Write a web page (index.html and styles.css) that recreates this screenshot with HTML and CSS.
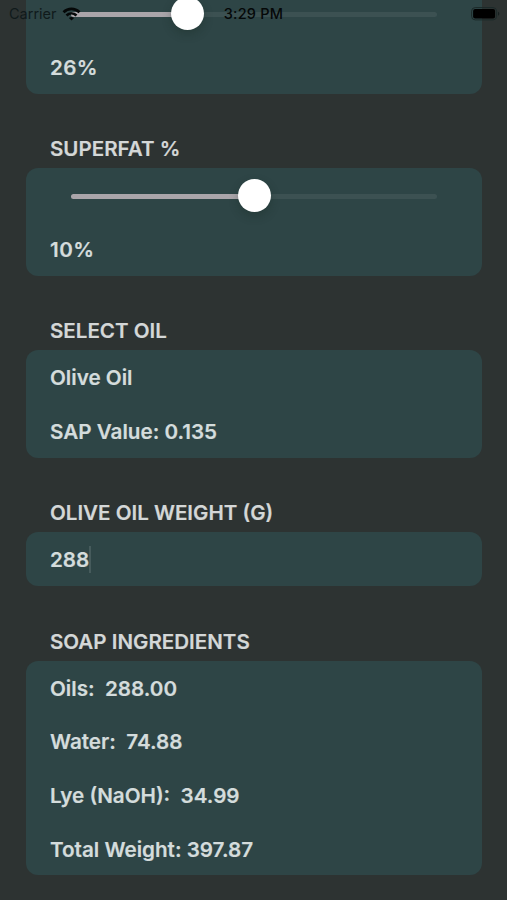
FILE: index.html
```html
<!DOCTYPE html>
<html lang="en">

<head>
    <meta charset="UTF-8">
    <meta name="viewport" content="width=device-width, initial-scale=1.0">
    <title>Soap Calculator</title>
    <link rel="stylesheet" href="styles.css">
</head>

<body>
    <div class="status-bar">
        <span class="carrier">Carrier</span>
        <svg class="wifi" viewBox="0 0 18 14" fill="none" stroke="#050808" stroke-width="2.7">
            <path d="M1 5.2 C5.6 0.7 12.4 0.7 17 5.2" />
            <path d="M4 8.5 C6.9 5.8 11.1 5.8 14 8.5" />
            <path d="M9 13.6 L6.4 11 C7.9 9.7 10.1 9.7 11.6 11 Z" fill="#050808" stroke="none" />
        </svg>
        <span class="time">3:29 PM</span>
        <svg class="battery" viewBox="0 0 29 14">
            <rect x="0.6" y="0.6" width="25" height="12.3" rx="3.6" fill="none" stroke="#1b2929" />
            <rect x="2.1" y="2.1" width="22" height="9.3" rx="2" fill="#000" />
            <path d="M27 4.7 C28.8 5.4 28.8 8.1 27 8.8 Z" fill="#172020" />
        </svg>
    </div>

    <main class="form">
        <section class="card">
            <div class="row slider-row">
                <div class="slider">
                    <div class="fill" style="width:32%"></div>
                    <div class="thumb" style="left:31.8%"></div>
                </div>
            </div>
            <div class="row percent">26%</div>
        </section>

        <h2 class="header">SUPERFAT %</h2>
        <section class="card">
            <div class="row slider-row">
                <div class="slider">
                    <div class="fill" style="width:50%"></div>
                    <div class="thumb" style="left:50.2%"></div>
                </div>
            </div>
            <div class="row percent">10%</div>
        </section>

        <h2 class="header">SELECT OIL</h2>
        <section class="card">
            <div class="row">Olive Oil</div>
            <div class="row">SAP Value: 0.135</div>
        </section>

        <h2 class="header">OLIVE OIL WEIGHT (G)</h2>
        <section class="card">
            <div class="row">288<span class="caret"></span></div>
        </section>

        <h2 class="header">SOAP INGREDIENTS</h2>
        <section class="card">
            <div class="row">Oils:&nbsp; 288.00</div>
            <div class="row">Water:&nbsp; 74.88</div>
            <div class="row">Lye (NaOH):&nbsp; 34.99</div>
            <div class="row">Total Weight: 397.87</div>
        </section>
    </main>
</body>

</html>
```
FILE: styles.css
```css
* {
    margin: 0;
    padding: 0;
    box-sizing: border-box;
}

body {
    height: 900px;
    overflow: hidden;
    background: #2d3332;
    font-family: Inter, "Liberation Sans", sans-serif;
    color: #d4dcdc;
}

/* status bar stays over the scrolled form */
.status-bar {
    position: absolute;
    z-index: 2;
    top: 0;
    left: 0;
    width: 507px;
    height: 27px;
    padding: 0 7px 0 9px;
    display: grid;
    grid-template-columns: 53px 1fr auto 1fr 29px;
    align-items: center;
    font-size: 14.5px;
    color: #050808;
}

.carrier {
    color: #101a1b;
}

.wifi {
    width: 19px;
    height: 14px;
}

.time {
    font-weight: 500;
    letter-spacing: 0.25px;
    margin-right: 26px;
}

.battery {
    grid-column: 5;
    width: 29px;
    height: 14px;
}

/* the form is scrolled so the first card starts above the top edge */
.form {
    margin-top: -13.6px;
    padding: 0 25px 0 26px;
}

.header {
    height: 74.7px;
    padding: 41.6px 0 0 24px;
    font-size: 20.55px;
    line-height: 27px;
    font-weight: 600;
    -webkit-text-stroke: 0.2px #d4d7d7;
    color: #d4d7d7;
}

.card {
    padding: 0 24px;
    border-radius: 12px;
    background: #2e4546;
}

.row {
    height: 53.65px;
    padding-top: 1.4px;
    display: flex;
    align-items: center;
    font-size: 20.65px;
    font-weight: 600;
    -webkit-text-stroke: 0.2px #d4dcdc;
}

.percent {
    letter-spacing: 0.4px;
}

.slider-row {
    padding: 0 21px;
}

.slider {
    position: relative;
    width: 366px;
    height: 5px;
    margin-top: 2px;
    border-radius: 3px;
    background: #3c5152;
}

.fill {
    height: 5px;
    border-radius: 3px;
    background: #aaa5aa;
}

.thumb {
    position: absolute;
    top: -15px;
    width: 33px;
    height: 33px;
    margin-left: -16.5px;
    border-radius: 50%;
    background: #fff;
    box-shadow: 0 4px 10px rgba(20, 40, 30, 0.3);
}

.caret {
    width: 2px;
    height: 27px;
    background: #465b5c;
}
```
